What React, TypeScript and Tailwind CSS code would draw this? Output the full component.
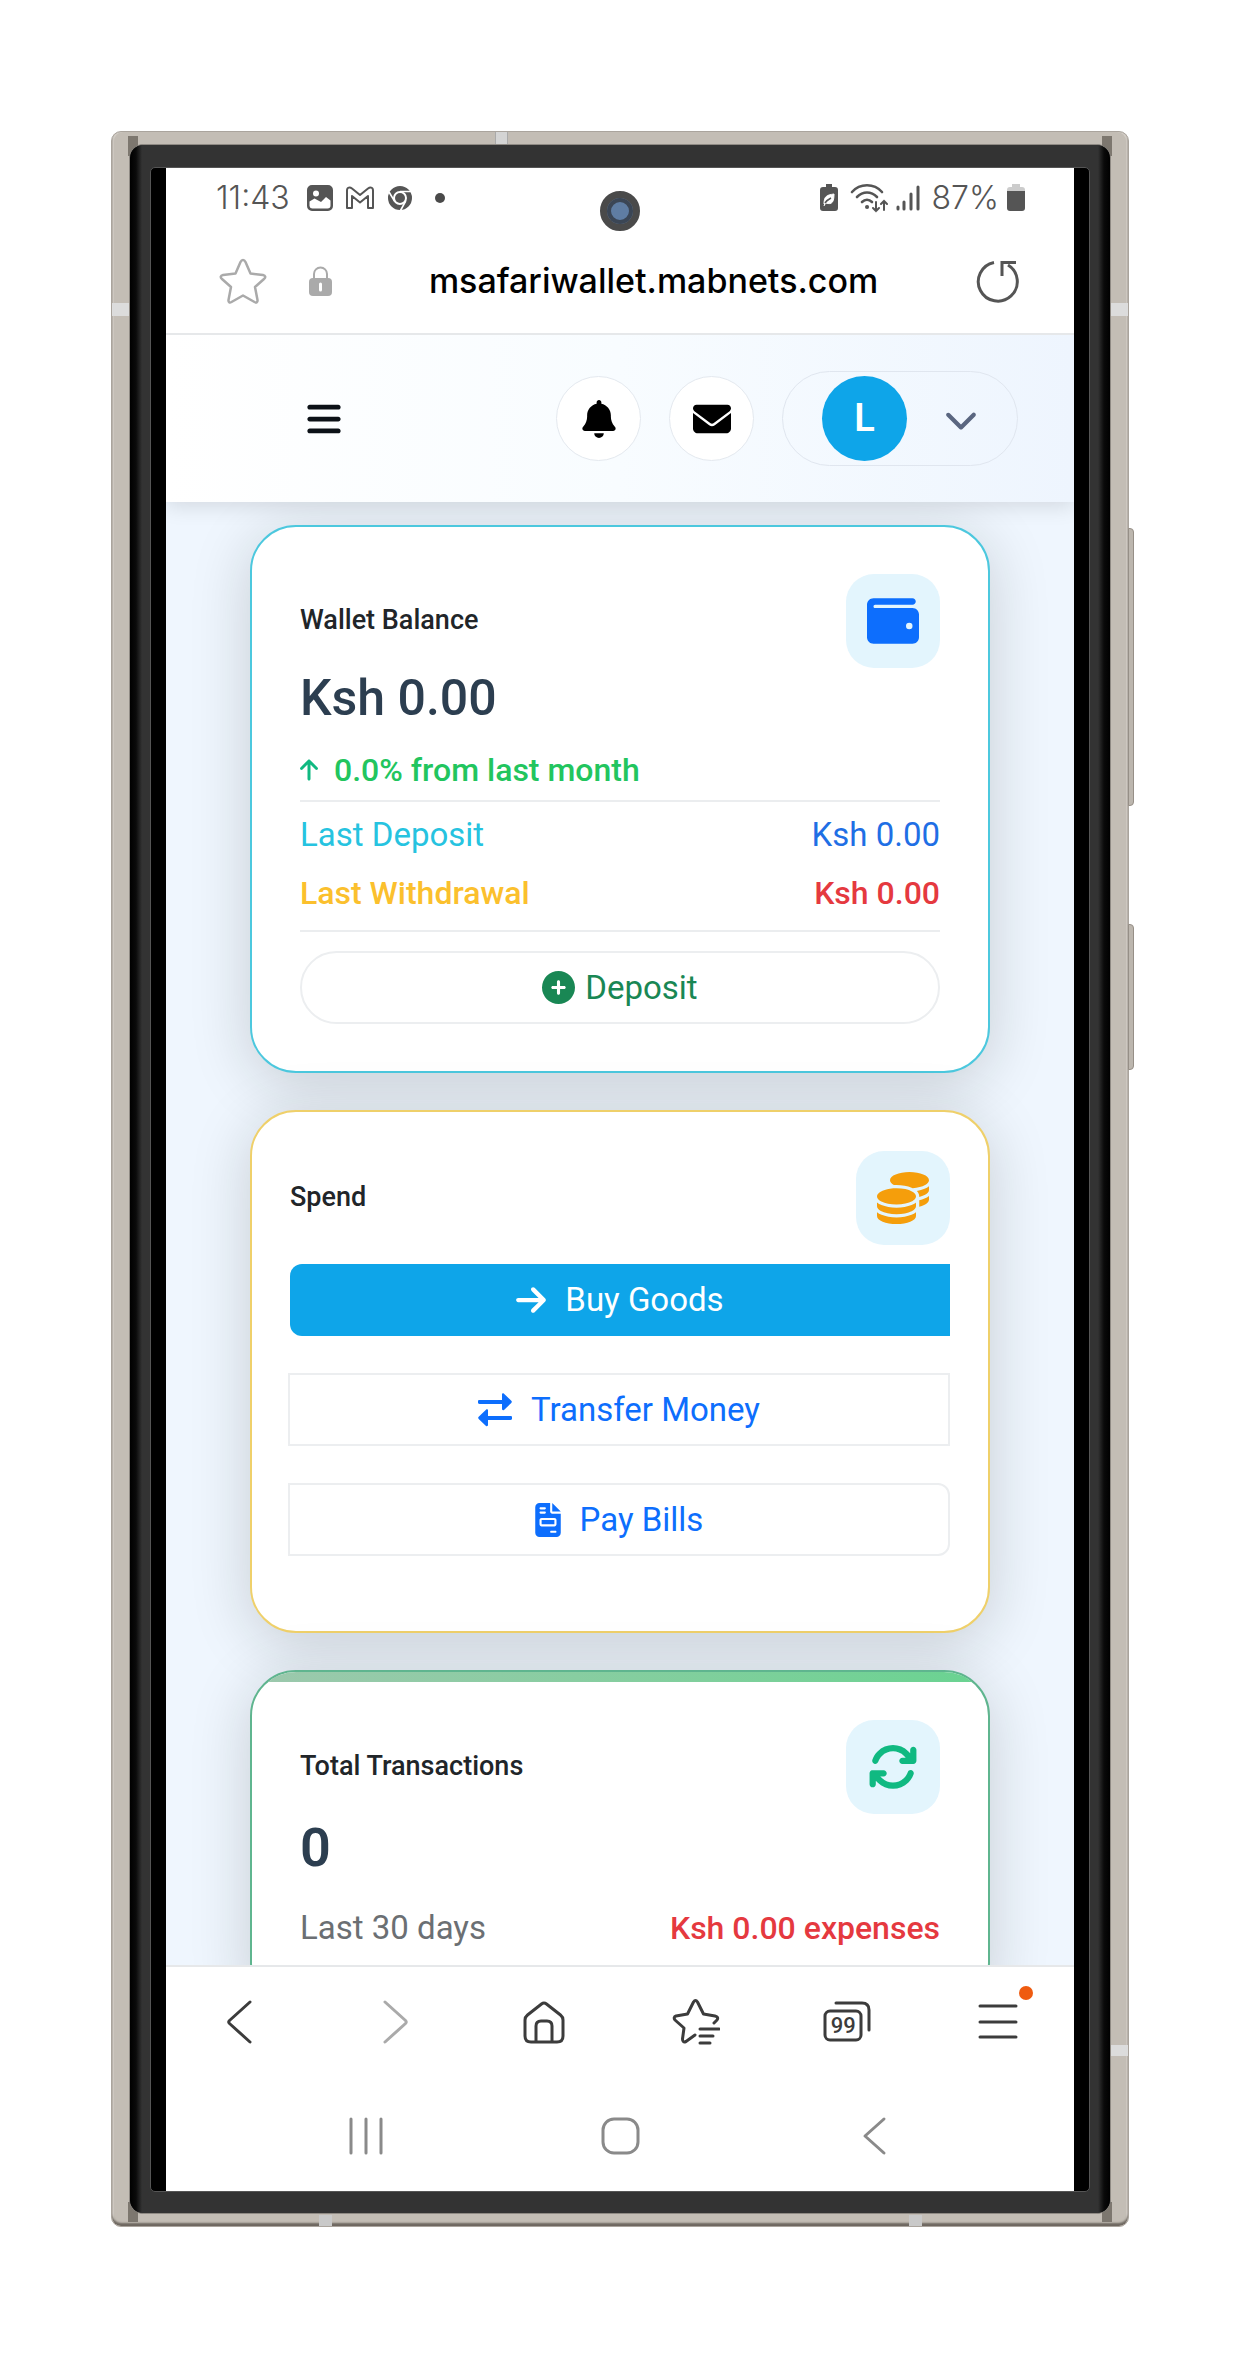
import React from 'react';
import { FaArrowRight, FaArrowUp, FaArrowsRotate, FaBars, FaBell, FaChevronDown, FaCirclePlus, FaCoins, FaEnvelope, FaFileInvoice, FaWallet } from 'react-icons/fa6';

function StatusBar() {
  return (
    <div className="relative flex h-[60px] items-center justify-between pr-[49px] pl-[50px] text-[#555]">
      <div className="flex items-center">
        <span className="w-[91px] font-[Inter] text-[32px] leading-8 font-light">11:43</span>
        <svg className="h-[26px] w-[26px]" viewBox="0 0 26 26" aria-label="Picture">
          <path fillRule="evenodd" fill="currentColor" d="M5 0h16a5 5 0 0 1 5 5v16a5 5 0 0 1-5 5H5a5 5 0 0 1-5-5V5a5 5 0 0 1 5-5zM2.500 16.500v4.500a3 3 0 0 0 3 2.500h15a3 3 0 0 0 3-3v-5l-4.500-3.500-5 5-6.500-3.500zM9 5.500a3 3 0 1 0 0 6 3 3 0 0 0 0-6z" />
        </svg>
        <svg className="ml-3 h-[26px] w-[30px]" viewBox="0 0 30 26" fill="none" stroke="currentColor" strokeWidth="2" strokeLinejoin="round" aria-label="Mail">
          <path d="M2 23V5.500C2 2 5 2 7 3.500L15 10l8-6.500C25 2 28 2 28 5.500V23h-5V11l-8 6.500L7 11v12z" />
        </svg>
        <svg className="ml-3 h-[26px] w-[26px]" viewBox="0 0 26 26" aria-label="Browser">
          <circle cx="13" cy="13" r="9.500" fill="none" stroke="currentColor" strokeWidth="5" />
          <circle cx="13" cy="13" r="5" fill="currentColor" />
          <path d="M13 6.500h11M7.500 16.200 2 7M18.700 16.200 13.500 25.500" stroke="#fff" strokeWidth="1.600" />
        </svg>
        <span className="ml-[22px] h-[10px] w-[10px] rounded-full bg-[#4a4a4a]" />
      </div>
      <div className="absolute top-[23px] left-1/2 h-10 w-10 -translate-x-1/2 rounded-full border-[7px] border-[#4a4a4a] bg-[#5f7da3] shadow-[inset_0_0_0_4px_#3b4655]" />
      <div className="flex items-center">
        <svg className="h-7 w-[18px]" viewBox="0 0 18 28" aria-label="Power saving">
          <path d="M6 0h6v3h3a3 3 0 0 1 3 3v18a3 3 0 0 1-3 3H3a3 3 0 0 1-3-3V6a3 3 0 0 1 3-3h3z" fill="currentColor" />
          <path d="M4 20c0-8 3-9 10-10 0 8-2 11-8 9M4 22c1-4 3-6 6-7" fill="#fff" stroke="#fff" />
          <path d="M5 19c2-3 4-4 6-5" stroke="currentColor" strokeWidth="1.500" />
        </svg>
        <svg className="ml-3 h-[30px] w-[38px]" viewBox="0 0 38 30" fill="none" stroke="currentColor" strokeWidth="2.600" strokeLinecap="round" aria-label="Wi-Fi">
          <path d="M2 9C10 0 24 0 32 9M7 14c6-6 14-6 20 0M12 19c3-3 7-3 10 0" />
          <path d="M17 24h.1" strokeWidth="4" />
          <path d="M26 19v9m-3-3 3 3 3-3M34 27V18m-3 3 3-3 3 3" strokeWidth="2" />
        </svg>
        <svg className="ml-2 h-[26px] w-6" viewBox="0 0 24 26" stroke="currentColor" strokeWidth="3" strokeLinecap="round" aria-label="Signal">
          <path d="M2 22v2M8 17v7M15 9v15M22 2v22" />
        </svg>
        <span className="ml-3 font-[Inter] text-[32px] leading-8 font-light">87%</span>
        <svg className="ml-2 h-7 w-[18px]" viewBox="0 0 18 28" aria-label="Battery">
          <path d="M5 0h8v3h2a3 3 0 0 1 3 3v3H0V6a3 3 0 0 1 3-3h2z" fill="#ccc" />
          <path d="M0 7h18v17a3 3 0 0 1-3 3H3a3 3 0 0 1-3-3z" fill="currentColor" />
        </svg>
      </div>
    </div>
  );
}

function AddressBar() {
  return (
    <div className="flex h-[107px] items-center justify-between border-b-2 border-[#e6e8ea] pr-[55px] pl-[53px]">
      <div className="flex items-center gap-[42px]">
        <button type="button" aria-label="Bookmark">
          <svg className="h-12 w-12" viewBox="0 0 48 48" fill="none" stroke="#aaa" strokeWidth="2.500" strokeLinejoin="round">
            <path d="M24 3c1.500 0 2 1 2.500 2l5 11.500L44 18c2.500.5 3 2.500 1 4l-9 8 2.500 13c.3 2-1 3-3 2L24 38.500 12.500 45c-2 1-3.300 0-3-2L12 30 3 22c-2-1.500-1.500-3.500 1-4l12.500-1.500 5-11.500c.5-1 1-2 2.500-2z" />
          </svg>
        </button>
        <svg className="h-[30px] w-[23px]" viewBox="0 0 23 30" aria-label="Secure">
          <path d="M5 13V8a6.500 6.500 0 0 1 13 0v5" fill="none" stroke="#aaa" strokeWidth="2" />
          <rect y="12" width="23" height="18" rx="4" fill="#aaa" />
          <path d="M11.500 18v6" stroke="#fff" strokeWidth="3" strokeLinecap="round" />
        </svg>
      </div>
      <span className="font-[Inter] text-[34px] leading-10 font-medium text-black">msafariwallet.mabnets.com</span>
      <button type="button" aria-label="Reload">
        <svg className="h-11 w-11" viewBox="0 0 44 44" fill="none" stroke="#555" strokeWidth="3">
          <path d="M19 3.500A19.500 19.500 0 1 0 33 6" />
          <path d="M41 3.500H27V17" />
        </svg>
      </button>
    </div>
  );
}

function AppHeader() {
  return (
    <header className="relative flex h-[167px] items-center justify-between bg-linear-to-r from-white via-[#f8fcff] to-[#eef5fe] pr-14 pl-[139px] shadow-[0_4px_20px_rgba(0,0,0,0.12)]">
      <button type="button" aria-label="Menu">
        <FaBars className="h-[38px] w-[38px] text-[#0c1117]" />
      </button>
      <div className="flex items-center gap-7">
        <button type="button" aria-label="Notifications" className="flex h-[85px] w-[85px] items-center justify-center rounded-full border border-[#e4e9ef] bg-white">
          <FaBell className="h-[38px] w-[38px] text-black" />
        </button>
        <button type="button" aria-label="Messages" className="flex h-[85px] w-[85px] items-center justify-center rounded-full border border-[#e4e9ef] bg-white">
          <FaEnvelope className="h-[38px] w-[38px] text-black" />
        </button>
        <button type="button" className="flex h-[95px] items-center gap-[37px] rounded-full border border-[#e0e6ef] pr-[39px] pl-[39px]">
          <span className="flex h-[85px] w-[85px] items-center justify-center rounded-full bg-[#0ea5e9] font-[Roboto] text-[38px] font-semibold text-white">L</span>
          <FaChevronDown className="h-9 w-[34px] text-[#5a6680]" />
        </button>
      </div>
    </header>
  );
}

function IconTile({ children }: { children: React.ReactNode }) {
  return <div className="flex h-[94px] w-[94px] shrink-0 items-center justify-center rounded-[28px] bg-[#e3f5fd]">{children}</div>;
}

const cardBase = 'rounded-[46px] border-2 bg-white shadow-[0_10px_60px_rgba(20,30,20,0.18)]';

function WalletCard() {
  return (
    <section className={`${cardBase} border-[#4cc8de] px-12 pt-[47px] pb-[47px]`}>
      <div className="flex items-start justify-between">
        <h2 className="pt-7 text-[27px] leading-9 font-medium text-[#212529]">Wallet Balance</h2>
        <IconTile><FaWallet className="h-[52px] w-[52px] text-[#0d6efd]" /></IconTile>
      </div>
      <p className="text-[50px] leading-[60px] font-medium text-[#2c3e50]">Ksh 0.00</p>
      <p className="mt-3 flex items-center gap-4 text-[32px] leading-[60px] font-medium text-[#22c55e]">
        <FaArrowUp className="h-[26px] w-[18px] text-[#10b981]" />0.0% from last month
      </p>
      <div className="border-y-2 border-[#ebedef] pt-1 pb-2 text-[33px] leading-[58px]">
        <div className="flex justify-between">
          <span className="text-[#26c3e0]">Last Deposit</span>
          <span className="text-[#1f6fe5]">Ksh 0.00</span>
        </div>
        <div className="flex justify-between text-[32px] font-medium">
          <span className="text-[#fbc02d]">Last Withdrawal</span>
          <span className="text-[#e5393f]">Ksh 0.00</span>
        </div>
      </div>
      <button type="button" className="mt-[19px] flex h-[73px] w-full items-center justify-center gap-[10px] rounded-full border-2 border-[#eceef0] text-[33px] text-[#198754]">
        <FaCirclePlus className="h-[33px] w-[33px]" />Deposit
      </button>
    </section>
  );
}

function TransferIcon() {
  return (
    <svg className="h-[34px] w-[34px]" viewBox="0 0 34 34" fill="currentColor" aria-hidden="true">
      <path d="M1.500 7H24V1.500c0-1 1-1.500 2-.8l7.300 7c.7.700.7 1.500 0 2.200l-7.300 7c-1 .7-2 .2-2-.8V11H1.500C.5 11 0 10.500 0 9.800V8.200C0 7.500.5 7 1.500 7z" />
      <path d="M32.500 23H10v-5.500c0-1-1-1.500-2-.8l-7.300 7c-.7.700-.7 1.500 0 2.200l7.300 7c1 .7 2 .2 2-.8V27h22.500c1 0 1.500-.5 1.500-1.200v-1.600c0-.7-.5-1.200-1.500-1.200z" />
    </svg>
  );
}

function SpendCard() {
  return (
    <section className={`${cardBase} border-[#efd06a] px-[38px] pt-[39px] pb-[75px]`}>
      <div className="flex items-start justify-between">
        <h2 className="pt-7 text-[27px] leading-9 font-medium text-[#212529]">Spend</h2>
        <IconTile><FaCoins className="h-[52px] w-[52px] text-[#f59e0b]" /></IconTile>
      </div>
      <div className="mt-[19px] flex flex-col gap-[37px] text-[33px]">
        <button type="button" className="flex h-[72px] items-center justify-center gap-[19px] rounded-l-xl bg-[#0ea5e9] text-white">
          <FaArrowRight className="h-[34px] w-[30px]" />Buy Goods
        </button>
        <button type="button" className="-ml-0.5 flex h-[73px] items-center justify-center gap-[19px] border-2 border-[#eceef0] text-[#0d6efd]">
          <TransferIcon />Transfer Money
        </button>
        <button type="button" className="-ml-0.5 flex h-[73px] items-center justify-center gap-[19px] rounded-r-xl border-2 border-[#eceef0] text-[#0d6efd]">
          <FaFileInvoice className="h-[34px] w-[26px]" />Pay Bills
        </button>
      </div>
    </section>
  );
}

function TransactionsCard() {
  return (
    <section className={`${cardBase} overflow-hidden border-[#5fb58f]`}>
      <div className="h-[10px] bg-linear-to-r from-[#9cc8ad] to-[#69d391]" />
      <div className="px-12 pt-[38px] pb-12">
        <div className="flex items-start justify-between">
          <h2 className="pt-7 text-[27px] leading-9 font-medium text-[#212529]">Total Transactions</h2>
          <IconTile><FaArrowsRotate className="h-[50px] w-[50px] text-[#10b981]" /></IconTile>
        </div>
        <p className="mt-1 text-[54px] leading-[60px] font-semibold text-[#2c3e50]">0</p>
        <div className="mt-5 flex justify-between text-[33px] leading-[60px]">
          <span className="text-[#6b6f73]">Last 30 days</span>
          <span className="text-[32px] font-medium text-[#e5393f]">Ksh 0.00 expenses</span>
        </div>
      </div>
    </section>
  );
}

function BrowserNav() {
  return (
    <nav aria-label="Browser" className="flex h-[111px] items-center justify-between border-t-2 border-[#e6e8ea] bg-white px-[51px] text-[#3c3c3c]">
      <button type="button" aria-label="Back">
        <svg className="h-12 w-12" viewBox="0 0 48 48" fill="none" stroke="currentColor" strokeWidth="3" strokeLinecap="round" strokeLinejoin="round"><path d="M33 4 12.500 22.500Q11 24 12.500 25.500L33 44" /></svg>
      </button>
      <button type="button" aria-label="Forward">
        <svg className="h-12 w-12" viewBox="0 0 48 48" fill="none" stroke="#aaa" strokeWidth="3" strokeLinecap="round" strokeLinejoin="round"><path d="M16 4l20.500 18.500q1.500 1.500 0 3L16 44" /></svg>
      </button>
      <button type="button" aria-label="Home">
        <svg className="h-12 w-12" viewBox="0 0 48 48" fill="none" stroke="currentColor" strokeWidth="3" strokeLinejoin="round">
          <path d="M7.500 17 21.500 6q2.500-2 5 0l14 11q2.500 2 2.500 5v16q0 6-6 6H11q-6 0-6-6V22q0-3 2.500-5z" />
          <path d="M16 44V28q0-5 5-5h6q5 0 5 5v16" />
        </svg>
      </button>
      <button type="button" aria-label="Bookmarks">
        <svg className="h-12 w-12" viewBox="0 0 48 48" fill="none" stroke="currentColor" strokeWidth="3" strokeLinecap="round" strokeLinejoin="round">
          <path d="M23 37 14 43.500Q10.500 45 10.500 41L12 30 3 22q-2-3 1-4l11.500-2L21.500 4q2-3 4 0l6 12 11.500 2q4 1 2 4l-3 3" />
          <path d="M28 31h19M28 38h13M28 45h10" />
        </svg>
      </button>
      <button type="button" aria-label="Tabs" className="relative h-12 w-12">
        <svg className="h-12 w-12" viewBox="0 0 48 48" fill="none" stroke="currentColor" strokeWidth="3" strokeLinecap="round">
          <rect x="2" y="13" width="36" height="29" rx="5" />
          <path d="M13 5h26q7 0 7 7v20" />
        </svg>
        <span className="absolute top-4 left-0.5 w-9 text-center text-[22px] leading-6 font-medium">99</span>
      </button>
      <button type="button" aria-label="More" className="relative">
        <svg className="h-12 w-12" viewBox="0 0 48 48" fill="none" stroke="currentColor" strokeWidth="3" strokeLinecap="round"><path d="M5 8h36M5 24h36M5 39h36" /></svg>
        <span className="absolute -top-3 -right-2.5 h-[14px] w-[14px] rounded-full bg-[#ef5b10]" />
      </button>
    </nav>
  );
}

function SystemNav() {
  return (
    <nav aria-label="System" className="flex h-[115px] items-center justify-between bg-white px-[180px] pt-1 text-[#8a8a8a]">
      <button type="button" aria-label="Recent apps">
        <svg className="h-10 w-10" viewBox="0 0 40 40" stroke="currentColor" strokeWidth="3" strokeLinecap="round"><path d="M5 3v34M20 3v34M35 3v34" /></svg>
      </button>
      <button type="button" aria-label="Home screen">
        <svg className="h-10 w-10" viewBox="0 0 40 40" fill="none" stroke="currentColor" strokeWidth="3"><rect x="3" y="3" width="35" height="34" rx="11" /></svg>
      </button>
      <button type="button" aria-label="System back">
        <svg className="h-10 w-10" viewBox="0 0 40 40" fill="none" stroke="currentColor" strokeWidth="3" strokeLinecap="round" strokeLinejoin="round"><path d="M30 3 11 20l19 17" /></svg>
      </button>
    </nav>
  );
}

export default function App() {
  return (
    <main className="min-h-screen bg-white pt-[131px] pr-[116px] pb-[131px] pl-[111px] font-[Roboto,sans-serif]">
      <div className="relative rounded-[10px] border border-[#aaa49d] bg-[#c3bdb5] px-[17px] pt-3 pb-3 shadow-[inset_0_-3px_2px_#6e6760,inset_2px_0_0_#d2cdc6,inset_-2px_0_0_#d2cdc6]">
        <span className="absolute top-1 left-4 h-5 w-[10px] bg-[#7d776f]" />
        <span className="absolute top-1 right-4 h-5 w-[10px] bg-[#7d776f]" />
        <span className="absolute bottom-1 left-4 h-5 w-[10px] bg-[#7d776f]" />
        <span className="absolute right-4 bottom-1 h-5 w-[10px] bg-[#7d776f]" />
        <span className="absolute top-0 left-[383px] h-3 w-[13px] border-x border-[#aaa] bg-[#d4d4d4]" />
        <span className="absolute top-[171px] left-0 h-[13px] w-[17px] bg-[#dcdcdc]" />
        <span className="absolute top-[171px] right-0 h-[13px] w-[17px] bg-[#dcdcdc]" />
        <span className="absolute right-0 bottom-[170px] h-[11px] w-[17px] bg-[#dcdcdc]" />
        <span className="absolute bottom-0 left-[207px] h-[11px] w-[13px] bg-[#c9c9c9]" />
        <span className="absolute right-[206px] bottom-0 h-[11px] w-[13px] bg-[#c9c9c9]" />
        <span className="absolute top-[396px] -right-[6px] h-[278px] w-[6px] rounded-r border border-[#968f87] bg-[#bcb6ae]" />
        <span className="absolute top-[792px] -right-[6px] h-[146px] w-[6px] rounded-r border border-[#968f87] bg-[#bcb6ae]" />
        <div className="relative rounded-[14px] border border-[#8f8a84] bg-[#333]">
          <div className="rounded-[13px] bg-[linear-gradient(90deg,#000_0,#0a0a0a_6px,#333_12px,#333_calc(100%_-_12px),#0a0a0a_calc(100%_-_6px),#000_100%)] px-5 pt-[22px] pb-[21px]">
            <div className="rounded-[5px] border border-[#555] bg-black px-[15px]">
              <div className="flex flex-col bg-white">
                <StatusBar />
                <AddressBar />
                <div className="h-[1630px] overflow-hidden bg-[#eff6fe]">
                  <AppHeader />
                  <div className="flex flex-col gap-[37px] px-[84px] pt-[23px]">
                    <WalletCard />
                    <SpendCard />
                    <TransactionsCard />
                  </div>
                </div>
                <BrowserNav />
                <SystemNav />
              </div>
            </div>
          </div>
        </div>
      </div>
    </main>
  );
}
